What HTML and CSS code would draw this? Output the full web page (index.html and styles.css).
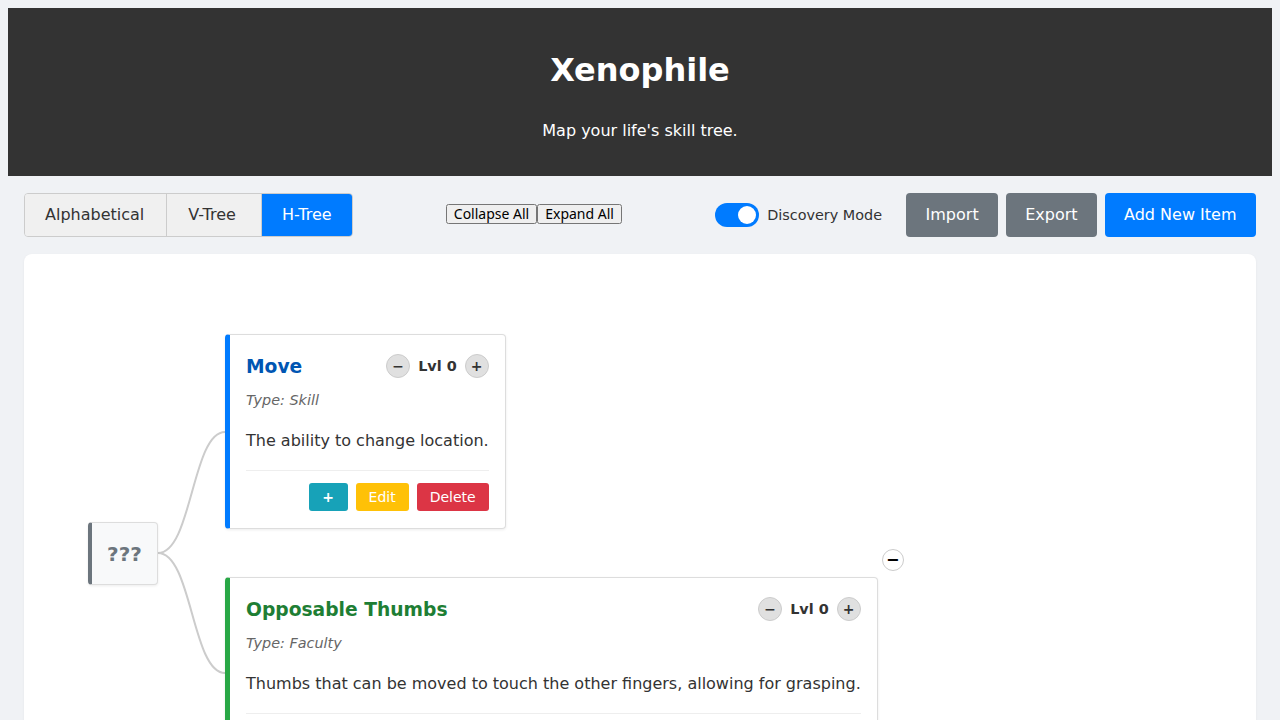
FILE: index.html
```html
<!DOCTYPE html>
<html lang="en">
<head>
<meta charset="utf-8">
<title>Xenophile</title>
<link rel="stylesheet" href="styles.css">
</head>
<body>
<header class="app-header">
  <h1 class="app-title">Xenophile</h1>
  <p class="app-subtitle">Map your life's skill tree.</p>
</header>
<main class="app-main">
  <div class="toolbar">
    <div class="view-tabs">
      <button class="tab">Alphabetical</button>
      <button class="tab tab-v">V-Tree</button>
      <button class="tab tab-active">H-Tree</button>
    </div>
    <div class="tree-controls">
      <button class="plain-btn">Collapse All</button><button class="plain-btn">Expand All</button>
    </div>
    <div class="actions">
      <label class="switch-wrap">
        <span class="switch"><span class="knob"></span></span>
        <span class="switch-label">Discovery Mode</span>
      </label>
      <button class="btn btn-gray btn-import">Import</button>
      <button class="btn btn-gray btn-export">Export</button>
      <button class="btn btn-blue">Add New Item</button>
    </div>
  </div>
  <section class="panel">
    <div class="tree">
      <svg class="links" width="160" height="440" viewBox="0 0 160 440">
        <path d="M70 219 C 104 219, 104 98, 137 98" />
        <path d="M70 219 C 104 219, 104 339, 137 339" />
      </svg>
      <div class="root-node">???</div>
      <div class="children">
        <div class="node">
          <div class="card card-skill">
            <div class="card-head">
              <h3 class="card-title title-skill">Move</h3>
              <div class="level">
                <button class="lvl-btn">−</button>
                <span class="lvl-text">Lvl 0</span>
                <button class="lvl-btn">+</button>
              </div>
            </div>
            <p class="card-type">Type: Skill</p>
            <p class="card-desc">The ability to change location.</p>
            <div class="card-foot">
              <button class="sm sm-teal sm-plus">+</button>
              <button class="sm sm-yellow">Edit</button>
              <button class="sm sm-red">Delete</button>
            </div>
          </div>
        </div>
        <div class="node">
          <button class="collapse-btn">−</button>
          <div class="card card-faculty">
            <div class="card-head">
              <h3 class="card-title title-faculty">Opposable Thumbs</h3>
              <div class="level">
                <button class="lvl-btn">−</button>
                <span class="lvl-text">Lvl 0</span>
                <button class="lvl-btn">+</button>
              </div>
            </div>
            <p class="card-type">Type: Faculty</p>
            <p class="card-desc">Thumbs that can be moved to touch the other fingers, allowing for grasping.</p>
            <div class="card-foot">
              <button class="sm sm-teal sm-plus">+</button>
              <button class="sm sm-yellow">Edit</button>
              <button class="sm sm-red">Delete</button>
            </div>
          </div>
        </div>
      </div>
    </div>
  </section>
</main>
</body>
</html>
```
FILE: styles.css
```css
body {
  margin: 8px;
  background: #f0f2f5;
  font-family: "DejaVu Sans", sans-serif;
  color: #333;
}
.app-header {
  background: #333;
  color: #fff;
  text-align: center;
  padding: 43px 20px 35px;
}
.app-title {
  margin: 0 0 32px;
  font-size: 32px;
  line-height: 38px;
  font-weight: bold;
}
.app-subtitle {
  margin: 0;
  font-size: 16px;
  line-height: 20px;
}
.app-main {
  padding: 17px 16px 0;
}
.toolbar {
  display: flex;
  justify-content: space-between;
  align-items: center;
  margin-bottom: 17px;
}
.view-tabs {
  display: flex;
  border: 1px solid #ccc;
  border-radius: 4px;
  overflow: hidden;
}
.tab {
  font-family: "DejaVu Sans", sans-serif;
  font-size: 16px;
  line-height: 20px;
  padding: 11px 22px 11px 20px;
  border: none;
  border-right: 1px solid #ccc;
  background: #f0f0f0;
  color: #333;
}
.tab-v { padding: 11px 25px 11px 21px; }
.tab:last-child { border-right: none; }
.tab-active {
  background: #007bff;
  color: #fff;
  padding: 11px 20px;
}
.tree-controls {
  display: flex;
  margin-top: -2px;
}
.plain-btn {
  font-family: "Noto Sans", sans-serif;
  font-size: 14px;
  line-height: 14px;
  padding: 1px 6px;
}
.actions {
  display: flex;
  align-items: center;
  gap: 8px;
}
.switch-wrap {
  display: flex;
  align-items: center;
  gap: 8px;
  margin-right: 16px;
}
.switch {
  width: 44px;
  height: 24px;
  border-radius: 12px;
  background: #007bff;
  position: relative;
  display: block;
}
.knob {
  position: absolute;
  right: 3px;
  top: 3px;
  width: 18px;
  height: 18px;
  border-radius: 50%;
  background: #fff;
}
.switch-label {
  font-size: 14.4px;
  color: #333;
}
.btn {
  font-family: "DejaVu Sans", sans-serif;
  font-size: 16px;
  line-height: 20px;
  padding: 12px 19.5px;
  border: none;
  border-radius: 4px;
  color: #fff;
}
.btn-export { padding: 12px 19px; }
.btn-gray { background: #6c757d; }
.btn-blue { background: #007bff; }
.panel {
  background: #fff;
  border-radius: 8px;
  padding: 80px 64px;
  min-height: 600px;
  box-shadow: 0 1px 3px rgba(0,0,0,0.05);
}
.tree {
  position: relative;
  display: flex;
  align-items: center;
  gap: 67px;
}
.links {
  position: absolute;
  left: 0;
  top: 0;
  overflow: visible;
}
.links path {
  fill: none;
  stroke: #ccc;
  stroke-width: 2;
}
.root-node {
  position: relative;
  box-sizing: border-box;
  width: 70px;
  text-align: center;
  font-size: 20px;
  font-weight: bold;
  line-height: 30px;
  color: #6c757d;
  background: #f8f9fa;
  border: 1px solid #ddd;
  border-left: 4px solid #6c757d;
  border-radius: 4px;
  padding: 16px 0 15px;
  box-shadow: 0 1px 3px rgba(0,0,0,0.08);
}
.children {
  display: flex;
  flex-direction: column;
  align-items: flex-start;
  gap: 48px;
}
.node {
  position: relative;
}
.card {
  position: relative;
  background: #fff;
  border: 1px solid #ddd;
  border-left: 5px solid #007bff;
  border-radius: 4px;
  padding: 16px 16px 17px 16px;
  width: max-content;
  box-shadow: 0 1px 3px rgba(0,0,0,0.08);
}
.card-skill { border-left-color: #007bff; }
.card-faculty { border-left-color: #28a745; }
.card-head {
  display: flex;
  justify-content: space-between;
  align-items: center;
  gap: 16px;
  height: 30px;
}
.card-title {
  margin: 0;
  padding-top: 2px;
  font-size: 18.7px;
  line-height: 28px;
  font-weight: bold;
}
.title-skill { color: #0056b3; }
.title-faculty { color: #1e7e34; }
.level {
  display: flex;
  align-items: center;
  gap: 8px;
}
.lvl-btn {
  width: 24px;
  height: 24px;
  border-radius: 50%;
  border: 1px solid #ccc;
  background: #e0e0e0;
  color: #333;
  font-family: "DejaVu Sans", sans-serif;
  font-size: 14px;
  font-weight: bold;
  padding: 0;
  line-height: 22px;
}
.lvl-text {
  font-size: 14.4px;
  font-weight: bold;
  color: #333;
}
.card-type {
  margin: 8px 0 0;
  font-size: 14.4px;
  line-height: 22px;
  font-style: italic;
  color: #666;
}
.card-desc {
  margin: 18px 0 0;
  font-size: 16px;
  line-height: 24px;
  color: #333;
}
.card-foot {
  margin-top: 17px;
  border-top: 1px solid #eee;
  padding-top: 12px;
  display: flex;
  justify-content: flex-end;
  gap: 8px;
}
.sm {
  font-family: "DejaVu Sans", sans-serif;
  font-size: 14px;
  line-height: 16px;
  padding: 5px 12px;
  border: 1px solid transparent;
  border-radius: 3px;
  color: #fff;
}
.sm-plus { font-weight: bold; padding: 5px 12.5px; }
.sm-teal { background: #17a2b8; }
.sm-yellow { background: #ffc107; }
.sm-red { background: #dc3545; }
.collapse-btn {
  position: absolute;
  top: -28px;
  right: -26px;
  width: 22px;
  height: 22px;
  border-radius: 50%;
  border: 1px solid #ccc;
  background: #fff;
  color: #000;
  font-family: "DejaVu Sans", sans-serif;
  font-size: 16px;
  font-weight: bold;
  padding: 0;
  line-height: 20px;
}
```
